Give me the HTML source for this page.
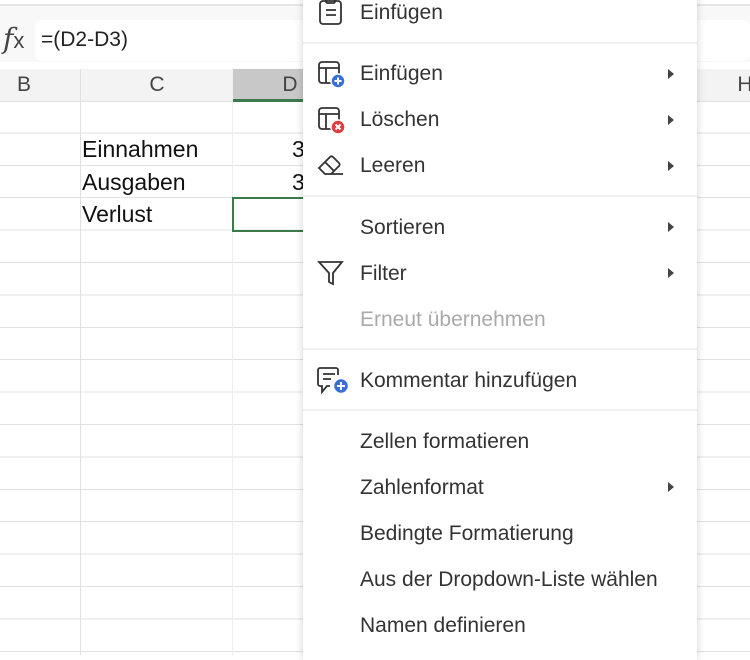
<!DOCTYPE html>
<html><head><meta charset="utf-8"><style>
body{margin:0;width:750px;height:655px;overflow:hidden;position:relative;background:#fff;font-family:"Liberation Sans",sans-serif;}
.abs{position:absolute}
#top{left:0;top:0;width:750px;height:62px;background:#f8f8f8;border-top:5px solid #fff;box-sizing:border-box}
#topline{left:0;top:4px;width:750px;height:2px;background:#e6e6e6}
#fx{left:3px;top:22px;font-family:"DejaVu Serif",serif;font-style:italic;font-size:28px;color:#444}
#input{left:35px;top:20px;width:715px;height:41px;background:#fff;border-radius:7px}
#formula{left:41px;top:28px;font-size:21px;color:#222}
#hdr{left:0;top:69px;width:750px;height:32px;background:#f3f3f3;border-bottom:1px solid #e2e2e2}
.h{position:absolute;top:69px;height:32px;line-height:32px;text-align:center;font-size:21px;color:#444}
#grid{left:0;top:101px;width:750px;height:554px;background:repeating-linear-gradient(to bottom,transparent 0,transparent 31.4px,#e2e2e2 31.4px,#e2e2e2 32.4px)}
.v{position:absolute;top:69px;width:1px;height:586px;background:#e0e0e0}
.cell{position:absolute;left:82px;font-family:"Liberation Sans",sans-serif;font-size:23px;color:#111}
#menu{left:303px;top:-10px;width:394px;height:670px;background:#fff;box-shadow:0 0 8px rgba(0,0,0,.18)}
.it{position:absolute;left:360px;font-size:21px;color:#333;line-height:24px}
.sep{position:absolute;left:303px;width:394px;height:2px;background:#f1f1f1}
.ar{position:absolute;left:668px;width:0;height:0;border-top:5px solid transparent;border-bottom:5px solid transparent;border-left:6px solid #444}
svg{position:absolute}
</style></head><body>
<div class="abs" id="top"></div><div class="abs" id="topline"></div>
<div class="abs" id="fx">f<span style="font-style:normal;font-family:'Liberation Sans';font-size:22px">x</span></div>
<div class="abs" id="input"></div>
<div class="abs" id="formula">=(D2-D3)</div>
<div class="abs" id="hdr"></div>
<div class="abs" style="left:232px;top:69px;width:71px;height:30px;background:#c8c8c8;border-bottom:3px solid #3c7a4b"></div>
<div class="h" style="left:14px;width:20px">B</div>
<div class="h" style="left:147px;width:20px">C</div>
<div class="h" style="left:280px;width:20px">D</div>
<div class="h" style="left:735px;width:20px">H</div>
<div class="abs" id="grid"></div>
<div class="v" style="left:80px"></div>
<div class="v" style="left:232px;background:#eee"></div>
<div class="cell" style="top:136px">Einnahmen</div>
<div class="cell" style="top:169px">Ausgaben</div>
<div class="cell" style="top:201px">Verlust</div>
<div class="cell" style="left:292px;top:136px">3</div>
<div class="cell" style="left:292px;top:169px">3</div>
<div class="abs" style="left:232px;top:197px;width:71px;height:31px;border:2px solid #3c7a4b;box-sizing:content-box"></div>

<div class="abs" id="menu"></div>
<svg style="left:317px;top:0" width="28" height="26" viewBox="0 0 28 26" fill="none" stroke="#333" stroke-width="1.8"><rect x="3" y="1" width="21" height="23" rx="3"/><rect x="9" y="-2" width="9" height="5" rx="1.5"/><path d="M9 10h10M9 15h10"/></svg>
<svg style="left:317px;top:60px" width="30" height="30" viewBox="0 0 30 30" fill="none" stroke="#333" stroke-width="1.8"><rect x="2" y="2" width="20" height="21" rx="3"/><path d="M2 8h20M9 8v15"/><circle cx="21" cy="21" r="7" fill="#3b6fd8" stroke="#fff" stroke-width="1.5"/><path d="M21 17.5v7M17.5 21h7" stroke="#fff" stroke-width="2"/></svg>
<svg style="left:317px;top:106px" width="30" height="30" viewBox="0 0 30 30" fill="none" stroke="#333" stroke-width="1.8"><rect x="2" y="2" width="20" height="21" rx="3"/><path d="M2 8h20M9 8v15"/><circle cx="21" cy="21" r="7" fill="#e03b3b" stroke="#fff" stroke-width="1.5"/><path d="M18.5 18.5l5 5M23.5 18.5l-5 5" stroke="#fff" stroke-width="2"/></svg>
<svg style="left:317px;top:153px" width="28" height="26" viewBox="0 0 28 26" fill="none" stroke="#333" stroke-width="1.8"><path d="M2 15L13 4a2 2 0 0 1 3 0l6 6a2 2 0 0 1 0 3l-8 8H8z M8 9l9 9M8 21h18"/></svg>
<svg style="left:317px;top:259px" width="28" height="28" viewBox="0 0 28 28" fill="none" stroke="#333" stroke-width="1.8"><path d="M2 3h23l-9 11v11l-4-2v-9z"/></svg>
<svg style="left:316px;top:366px" width="34" height="30" viewBox="0 0 34 30" fill="none" stroke="#333" stroke-width="1.8"><path d="M22 9V4a2 2 0 0 0-2-2H4a2 2 0 0 0-2 2v14a2 2 0 0 0 2 2h2v6l5-6h3M7 8h12M7 13h8"/><circle cx="25" cy="20" r="7.5" fill="#3b6fd8" stroke="#fff" stroke-width="1.5"/><path d="M25 16v8M21 20h8" stroke="#fff" stroke-width="2"/></svg>

<div class="it" style="top:1px">Einfügen</div>
<div class="sep" style="top:42px"></div>
<div class="it" style="top:62px">Einfügen</div><div class="ar" style="top:69px"></div>
<div class="it" style="top:108px">Löschen</div><div class="ar" style="top:115px"></div>
<div class="it" style="top:154px">Leeren</div><div class="ar" style="top:161px"></div>
<div class="sep" style="top:195px"></div>
<div class="it" style="top:216px">Sortieren</div><div class="ar" style="top:222px"></div>
<div class="it" style="top:262px">Filter</div><div class="ar" style="top:268px"></div>
<div class="it" style="top:308px;color:#aaa">Erneut übernehmen</div>
<div class="sep" style="top:348px"></div>
<div class="it" style="top:369px">Kommentar hinzufügen</div>
<div class="sep" style="top:409px"></div>
<div class="it" style="top:430px">Zellen formatieren</div>
<div class="it" style="top:476px">Zahlenformat</div><div class="ar" style="top:482px"></div>
<div class="it" style="top:522px">Bedingte Formatierung</div>
<div class="it" style="top:568px">Aus der Dropdown-Liste wählen</div>
<div class="it" style="top:614px">Namen definieren</div>
</body></html>
